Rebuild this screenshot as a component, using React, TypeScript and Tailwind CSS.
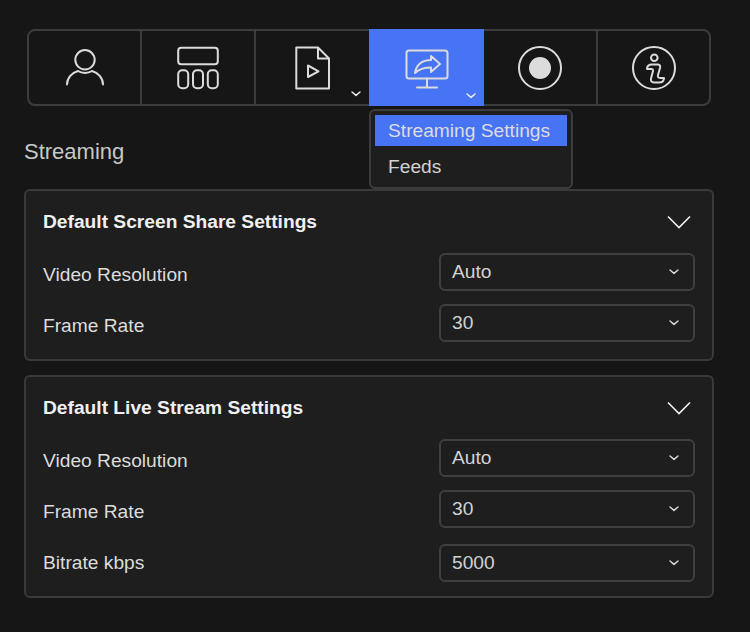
import React from 'react';

const font = { fontFamily: '"Liberation Sans", Arial, sans-serif' };

const SmallChevron = ({ className }: { className: string }) => (
    <svg viewBox="0 0 10 6" fill="none" stroke="currentColor" strokeWidth={1.4} strokeLinecap="round" strokeLinejoin="round" className={className}>
        <path d="M1 1l4 3.4L9 1" />
    </svg>
);

const UserIcon = () => (
    <svg viewBox="0 0 38 38" fill="none" stroke="#dcdcdc" strokeWidth={2} strokeLinecap="round" className="w-[38px] h-[38px]">
        <circle cx="19" cy="10.800" r="9.700" />
        <path d="M1 35.500C1 29 6 23.500 12 22c4 2.500 10 2.500 14 0 6 1.500 11 7 11 13.500" />
    </svg>
);

const LayoutIcon = () => (
    <svg viewBox="0 0 44 44" fill="none" stroke="#dcdcdc" strokeWidth={2} className="w-[44px] h-[44px]">
        <rect x="2.200" y="1.700" width="39.600" height="16.600" rx="3" />
        <rect x="2.200" y="24.300" width="10" height="18" rx="4" />
        <rect x="17" y="24.300" width="10" height="18" rx="4" />
        <rect x="31.800" y="24.300" width="10" height="18" rx="4" />
    </svg>
);

const FileIcon = () => (
    <svg viewBox="0 0 36 44" fill="none" stroke="#dcdcdc" strokeWidth={2} strokeLinejoin="round" className="w-9 h-11">
        <path d="M1.300 1.500H23L34 12.500v30H1.300z" />
        <path d="M23 1.500V12.500H34" />
        <path d="M13 19.500l10.500 5.800L13 31z" />
    </svg>
);

const ShareIcon = () => (
    <svg viewBox="0 0 44 42" fill="none" stroke="#dcdcdc" strokeWidth={2} strokeLinecap="round" strokeLinejoin="round" className="w-[44px] h-[42px]">
        <rect x="1.500" y="3.500" width="41" height="28" rx="2.500" />
        <path d="M22 31.500v9M12 40.500h20" />
        <path d="M26 9l9 8-9 8v-4.500c-7 0-12 1.500-16 5.500 1-8 7-13 16-13z" />
    </svg>
);

const RecordIcon = () => (
    <svg viewBox="0 0 44 44" className="w-[44px] h-[44px]">
        <circle cx="22" cy="22" r="21" fill="none" stroke="#dcdcdc" strokeWidth={2} />
        <circle cx="22" cy="22" r="11" fill="#dcdcdc" />
    </svg>
);

const InfoIcon = () => (
    <svg viewBox="0 0 44 44" fill="none" stroke="#dcdcdc" strokeWidth={2} strokeLinecap="round" strokeLinejoin="round" className="w-[44px] h-[44px]">
        <circle cx="22" cy="22" r="21" />
        <circle cx="22.300" cy="11.700" r="3.300" />
        <path d="M15 23c0-3 2-4.500 5-4.500h6c2 0 2.500 1.500 2 3.500l-2 7c-.5 2 .5 3 2 3h4c0 3-2 4.500-5 4.500h-5c-2.500 0-3.500-1.500-3-4l2-7.500c.3-1.500-.5-2-2-2z" />
    </svg>
);

type Tab = { icon: React.ReactNode; width: string; menu?: boolean; active?: boolean };

const tabs: Tab[] = [
    { icon: <UserIcon />, width: 'w-[111px]' },
    { icon: <LayoutIcon />, width: 'w-[114px] border-l-2 border-[#3c3c3c]' },
    { icon: <FileIcon />, width: 'w-[115px] border-l-2 border-[#3c3c3c]', menu: true },
    { icon: <ShareIcon />, width: 'w-[115px]', menu: true, active: true },
    { icon: <RecordIcon />, width: 'w-[112px]' },
    { icon: <InfoIcon />, width: 'w-[113px] border-l-2 border-[#3c3c3c]' },
];

const Row = ({ label, value, className }: { label: string; value: string; className?: string }) => (
    <div className={`flex items-center justify-between ${className ?? ''}`}>
        <span className="text-[19.2px] text-[#dcdcdc] relative top-[3px]">{label}</span>
        <div className="w-[256px] h-[38px] flex items-center justify-between pl-[11px] pr-[14px] rounded-[6px] border-2 border-[#3f3f3f] text-[19.2px] text-[#d2d2d2]">
            <span>{value}</span>
            <SmallChevron className="w-[10px] h-[6px] text-[#dcdcdc]" />
        </div>
    </div>
);

const Section = ({ title, rows, className }: { title: string; rows: string[][]; className: string }) => (
    <section className={`rounded-[6px] border-2 border-[#3a3a3a] bg-[#1e1e1e] px-[17px] ${className}`}>
        <div className="flex items-center justify-between h-[62px]">
            <h3 className="text-[19.2px] font-bold text-[#f0f0f0]">{title}</h3>
            <svg viewBox="0 0 24 14" fill="none" stroke="#f0f0f0" strokeWidth={1.6} className="w-[24px] h-[14px] mr-[4px]">
                <path d="M1 1.500l11 11 11-11" />
            </svg>
        </div>
        <div className="flex flex-col gap-[13px]">
            {rows.map(([label, value], i) => (
                <Row key={label} label={label} value={value} className={i === 2 ? 'mt-[3px] [&>span]:top-0' : ''} />
            ))}
        </div>
    </section>
);

const App: React.FC = () => {
    return (
        <div style={font} className="relative w-[750px] h-[632px] bg-[#161616] pt-[29px] pl-[24px] pr-[36px] overflow-hidden">
            <div className="mx-[3px] h-[77px] flex rounded-[8px] border-2 border-[#3c3c3c]">
                {tabs.map((tab, i) => (
                    <div
                        key={i}
                        className={`relative flex items-center justify-center ${tab.width} ${tab.active ? 'bg-[#4773f5] -my-[2px]' : ''}`}
                    >
                        {tab.icon}
                        {tab.menu && <SmallChevron className="absolute right-[8px] bottom-[7px] w-[10px] h-[6px] text-[#f0f0f0]" />}
                    </div>
                ))}
            </div>

            <h2 className="mt-[33px] text-[22px] leading-[26px] text-[#c8c8c8]">Streaming</h2>

            <div className="absolute left-[369px] top-[109px] w-[204px] h-[80px] rounded-[6px] border-2 border-[#3c3c3c] bg-[#1e1e1e] px-[4px] pt-[4px] text-[19.2px] text-[#d2d2d2]">
                <div className="h-[31px] bg-[#4773f5] pl-[13px] leading-[31px] text-[#dcdcdc]">Streaming Settings</div>
                <div className="h-[41px] pl-[13px] leading-[41px]">Feeds</div>
            </div>

            <Section
                title="Default Screen Share Settings"
                className="mt-[24px] h-[172px]"
                rows={[['Video Resolution', 'Auto'], ['Frame Rate', '30']]}
            />
            <Section
                title="Default Live Stream Settings"
                className="mt-[14px] h-[223px]"
                rows={[['Video Resolution', 'Auto'], ['Frame Rate', '30'], ['Bitrate kbps', '5000']]}
            />
        </div>
    );
};

export default App;
